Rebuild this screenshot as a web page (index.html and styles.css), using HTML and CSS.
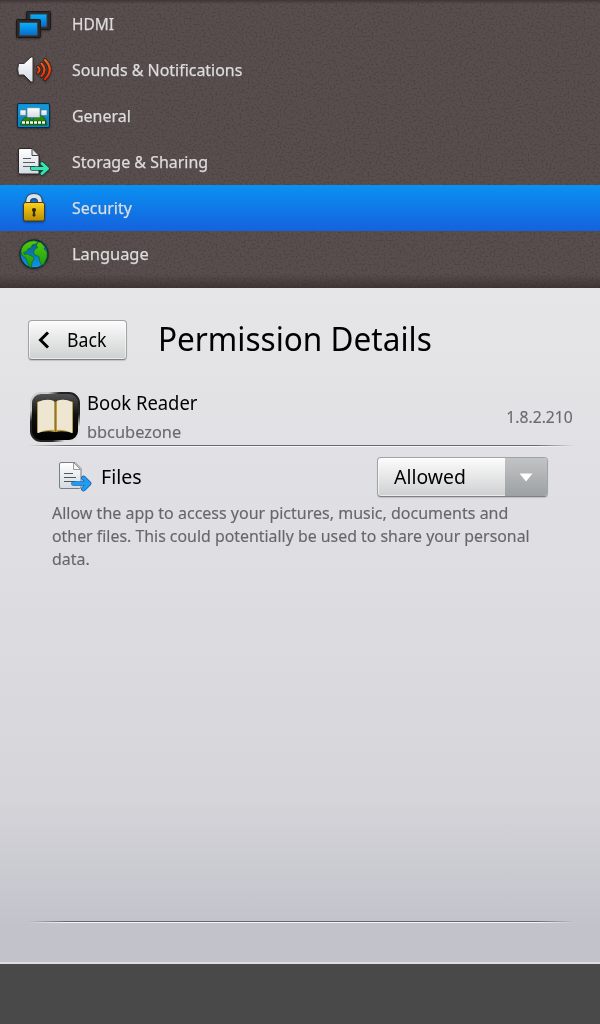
FILE: index.html
```html
<!DOCTYPE html>
<html lang="en">
<head>
<meta charset="utf-8">
<title>Permission Details</title>
<link rel="stylesheet" href="styles.css">
</head>
<body>
<svg class="defs" width="0" height="0" aria-hidden="true">
  <defs>
    <linearGradient id="screen" x2="0" y2="1"><stop stop-color="#08b0fb"/><stop offset="1" stop-color="#0869cb"/></linearGradient>
    <linearGradient id="paper" x2="0" y2="1"><stop stop-color="#fff"/><stop offset="1" stop-color="#d2dae3"/></linearGradient>
    <linearGradient id="gold" x2="0" y2="1"><stop stop-color="#ffd21c"/><stop offset="1" stop-color="#b88b00"/></linearGradient>
    <linearGradient id="leaf" x2="0" y2="1"><stop stop-color="#55c80d"/><stop offset="1" stop-color="#189b12"/></linearGradient>
    <linearGradient id="sea" x2="0" y2="1"><stop stop-color="#075985"/><stop offset="1" stop-color="#1297e4"/></linearGradient>
    <linearGradient id="wave" x2="0" y2="1"><stop stop-color="#ff6415"/><stop offset="1" stop-color="#ed2905"/></linearGradient>
    <linearGradient id="tile" x2="0" y2="1"><stop stop-color="#555"/><stop offset=".45" stop-color="#111"/><stop offset="1" stop-color="#000"/></linearGradient>
    <linearGradient id="rim" x2="1" y2="1"><stop stop-color="#ccc"/><stop offset=".18" stop-color="#ccc"/><stop offset=".3" stop-color="#222"/><stop offset=".72" stop-color="#222"/><stop offset=".85" stop-color="#ddd"/><stop offset="1" stop-color="#ddd"/></linearGradient>
  </defs>
</svg>
<nav class="menu">
  <svg class="grain" width="600" height="288" aria-hidden="true">
    <filter id="noise" x="0" y="0" width="100%" height="100%" color-interpolation-filters="sRGB"><feTurbulence type="fractalNoise" baseFrequency=".5" numOctaves="2" seed="4"/><feColorMatrix values="0 0 0 0 .16  0 0 0 0 .13  0 0 0 0 .13  0 5 0 0 -2.4"/></filter>
    <rect width="600" height="288" filter="url(#noise)" opacity=".2"/>
  </svg>
  <a class="item"><svg class="icon" viewBox="0 0 46 46"><g stroke="#1b1b1c"><rect x="26.500" y="10.500" width="24" height="18" rx="1" fill="#29292b" transform="translate(-6 0)"/><rect x="24" y="13" width="17" height="13" fill="url(#screen)" stroke="#3c3c3e"/><rect x="10.500" y="18.500" width="24" height="18" rx="1" fill="#29292b"/><rect x="13.500" y="21.500" width="18" height="13" fill="url(#screen)" stroke="#424245"/></g></svg><span class="hdmi">HDMI</span></a>
  <a class="item"><svg class="icon" viewBox="0 0 46 46"><path d="M12.500 16.500h5.500l7-6.500h2v25h-2l-7-7h-5.500q-1.500-5.500 0-11.500z" fill="url(#paper)" stroke="#3b3434"/><g fill="none" stroke="#31201f" stroke-width="3.600" stroke-linecap="round"><path d="M32 20q3 2.700 0 5.500M35.500 16.500q6 6.300 0 12.500M39 13q9.500 9.500 0 19"/></g><g fill="none" stroke="url(#wave)" stroke-width="2.100" stroke-linecap="round"><path d="M32 20q3 2.700 0 5.500M35.500 16.500q6 6.300 0 12.500M39 13q9.500 9.500 0 19"/></g></svg><span class="sounds">Sounds &amp; Notifications</span></a>
  <a class="item"><svg class="icon" viewBox="0 0 46 46"><rect x="11.500" y="10.500" width="32" height="24" rx="1.500" fill="#1186c7" stroke="#082b43"/><path d="M12.500 11.500h30v12h-30z" fill="#1396d7"/><path d="M14 32q3-8 7-8 3 0 5 4 3-7 8-6 5 1 7 10z" fill="#278d08" stroke="#135908" stroke-width=".8"/><g fill="url(#paper)" stroke="#477084" stroke-width=".6"><rect x="14" y="17" width="6" height="5.500" rx=".7"/><rect x="21" y="14.700" width="13" height="9.800" rx=".7"/><rect x="35" y="17" width="6" height="5.500" rx=".7"/></g><path d="M16 29.500h24" fill="none" stroke="#194a0e" stroke-width="3.500"/><path d="M16 29.500h24" fill="none" stroke="#fbfff0" stroke-width="2.600" stroke-dasharray="3 1"/></svg><span class="general">General</span></a>
  <a class="item"><svg class="icon" viewBox="0 0 46 46"><path d="M12.500 11q0-1.500 1.500-1.500h12l7 7v17q0 1.500-1.500 1.500h-17.500q-1.500 0-1.500-1.500z" fill="url(#paper)" stroke="#292626"/><path d="M26 9.500v7h7z" fill="#e2e5e8" stroke="#444"/><path d="M17 19.500h8m-8 4h12m-12 4h12" fill="none" stroke="#555b61" stroke-width="1"/><path d="M26 29.500h15m-5-5 5.500 5-5.500 5" fill="none" stroke="#17443a" stroke-width="4.300" stroke-linecap="round" stroke-linejoin="round"/><path d="M26 29.500h15m-5-5 5.500 5-5.500 5" fill="none" stroke="#35e5b1" stroke-width="2.900" stroke-linecap="round" stroke-linejoin="round"/></svg><span class="storage">Storage &amp; Sharing</span></a>
  <a class="item selected"><svg class="icon" viewBox="0 0 46 46"><path d="M22 19v-2q0-6 6-6t6 6v2" fill="none" stroke="#31465a" stroke-width="5.500"/><path d="M22 19v-2q0-6 6-6t6 6v2" fill="none" stroke="#dce2e8" stroke-width="3.800"/><rect x="17.500" y="17.500" width="21" height="18.500" rx="2" fill="url(#gold)" stroke="#3f3921"/><circle cx="28" cy="25" r="2.100" fill="#302704"/><path d="m28 24 1 7h-2z" fill="#302704" stroke="#302704"/></svg><span class="security">Security</span></a>
  <a class="item"><svg class="icon" viewBox="0 0 46 46"><circle cx="28" cy="23" r="14" fill="url(#sea)" stroke="#182a33" stroke-width="1.300"/><path d="M15 21q0-7 8-10.500l5-.8 4 1-2 2.300-4 1-.5 2.500-3 1-2 3-3 1 1 2 3-.5 6 3 .5 2-2 3-.5 5-1.500.5-3-6-1-3.500-4-3zM32 11l3 .5 4 4.500-1 2 3 3v5l-3 7-2.500 1.500-2-5-.5-4-4-1.500-1.500-3 2-3.500 2-.5-1-3z" fill="url(#leaf)" stroke="#096024" stroke-width=".6"/></svg><span class="language">Language</span></a>
</nav>
<main class="details">
  <header class="heading"><button class="back"><svg width="12" height="18" viewBox="0 0 12 18"><path d="m10 1.500-7.500 7.500 7.500 7.500" fill="none" stroke="#000" stroke-width="3"/></svg><span class="back-text">Back</span></button><h1><span class="title">Permission Details</span></h1></header>
  <section class="app">
    <svg class="book" width="50" height="50" viewBox="0 0 50 50"><rect x="1" y="1" width="48" height="48" rx="10" fill="url(#tile)" stroke="url(#rim)" stroke-width="2"/><path d="M7 10l8-2q6-.5 10 2 4-3 10-2l8 2v31q-11-3-17-1h-2q-6-2-17 1z" fill="#b89b4b"/><path d="M8 10q9-4 16-1v29q-7-1-16 3zM27 9q7-3 15 1v31q-9-4-15-3z" fill="#eee6d1"/><path d="M25.500 10v30" stroke="#92752b" stroke-width="1"/></svg>
    <div class="app-info"><div class="app-name"><span class="name">Book Reader</span></div><div class="vendor"><span class="author">bbcubezone</span></div></div>
    <div class="version"><span class="number">1.8.2.210</span></div>
  </section>
  <div class="rule"></div>
  <section class="permission">
    <div class="permission-head"><svg width="36" height="34" viewBox="0 0 36 34"><path d="M3.500 3q0-1.500 1.500-1.500h14l6 6v18.500q0 1.500-1.500 1.500h-18.500q-1.500 0-1.500-1.500z" fill="url(#paper)" stroke="#7d7d7d"/><path d="M17.500 1.500v7h7z" fill="#f6f6f6" stroke="#999"/><path d="M8 12.500h9m-9 4h12m-12 4h12" fill="none" stroke="#555" stroke-width="1"/><path d="M17.500 22.500h15m-5-5.500 5.500 5.500-5.500 5.500" fill="none" stroke="#165f9e" stroke-width="4.700" stroke-linecap="round" stroke-linejoin="round"/><path d="M17.500 22.500h15m-5-5.500 5.500 5.500-5.500 5.500" fill="none" stroke="#209cf8" stroke-width="3.300" stroke-linecap="round" stroke-linejoin="round"/></svg><h2><span class="files">Files</span></h2><button class="select"><span class="choice"><span class="allowed">Allowed</span></span><span class="drop"><svg width="14" height="9" viewBox="0 0 14 9"><path d="M.5.5h13L7 8.500z" fill="#fff"/></svg></span></button></div>
    <p><span class="copy one">Allow the app to access your pictures, music, documents and</span><span class="copy two">other files. This could potentially be used to share your personal</span><span class="copy three">data.</span></p>
  </section>
  <div class="rule bottom"></div>
</main>
<footer></footer>
</body>
</html>
```
FILE: styles.css
```css
* { box-sizing: border-box; }
body { margin: 0; width: 600px; height: 1024px; display: flex; flex-direction: column; overflow: hidden; background: #494949; font-family: "Noto Sans", "Open Sans", sans-serif; }
.defs { position: absolute; }
span { white-space: nowrap; }
.menu { position: relative; height: 288px; padding-top: 1px; background: #584e4d; color: #dedddc; font-size: 17px; }
.menu::after { content: ""; position: absolute; inset: 0; pointer-events: none; background: linear-gradient(#3e3636, transparent 4px, transparent 274px, rgba(48, 40, 40, .65)); }
.grain { position: absolute; inset: 0; }
.item { position: relative; z-index: 1; display: flex; align-items: center; height: 46px; padding-left: 6px; }
.icon { width: 46px; height: 46px; margin-right: 20px; filter: drop-shadow(0 1px 1px rgba(0, 0, 0, .4)); }
.item > span { display: inline-block; padding-bottom: 2px; transform-origin: left; transform: scaleX(.938); -webkit-text-stroke: .25px; }
.item > .hdmi { transform: scaleX(.91); }
.item > .language { transform: scaleX(.965); }
.selected { background: linear-gradient(#0a91f2, #1562dc); }
.details { height: 676px; padding: 32px 26px 0 28px; background: linear-gradient(#e6e6e8, #dddde2 42%, #d5d5da 75%, #c2c2cb 95%, #c2c2ca); border-bottom: 2px solid #dcdde2; }
.heading { display: flex; height: 40px; align-items: center; }
button { font: inherit; color: #000; padding: 0; border: 1px solid #a0a3a8; border-bottom-color: #7d8186; border-radius: 4px; background: linear-gradient(#fcfcfc, #cfd0d1); box-shadow: inset 0 0 0 1px rgba(255,255,255,.55), 0 1px 1px rgba(0, 0, 0, .15); }
.back { width: 99px; height: 40px; display: flex; align-items: center; padding-left: 9px; font-size: 19px; }
.back svg { margin-right: 17px; }
h1, h2, p { margin: 0; font-weight: 400; }
h1 { margin-left: 31px; padding-bottom: 3px; font-size: 32px; line-height: 40px; }
h1 span, h2 span, .back-text, .name, .author, .number, .allowed, .copy { display: inline-block; transform-origin: left; }
.title { transform: scaleX(.985); }
.back-text { transform: scaleX(.93); }
.app { display: flex; height: 53px; margin-top: 32px; padding-left: 2px; }
.app-info { padding-left: 7px; }
.app-name { height: 23px; font-size: 19px; line-height: 23px; }
.name { transform: scaleX(.97); }
.vendor { font-size: 17px; color: #696a6e; line-height: 34px; }
.author { transform: scaleX(.962); }
.version { margin-left: auto; padding-right: 1px; color: #696a6e; font-size: 16px; line-height: 50px; }
.author, .number, .copy { -webkit-text-stroke: .15px; }
.number { transform-origin: right; transform: scaleX(.98); }
.rule { height: 2px; background: linear-gradient(#68696d 0 50%, #f6f6f7 50%); -webkit-mask-image: linear-gradient(90deg, transparent, #000 7%, #000 93%, transparent); mask-image: linear-gradient(90deg, transparent, #000 7%, #000 93%, transparent); }
.permission { padding: 10px 26px 0 24px; }
.permission-head { display: flex; height: 44px; padding-left: 4px; align-items: flex-start; }
.permission-head > svg { margin-top: 4px; }
h2 { margin-left: 9px; font-size: 19px; line-height: 41px; }
.files { transform: scaleX(1.03); }
.select { margin-left: auto; width: 171px; height: 40px; display: flex; overflow: hidden; }
.choice { width: 127px; padding-left: 16px; text-align: left; line-height: 38px; font-size: 19px; }
.allowed { transform: scaleX(1.02); }
.drop { width: 42px; display: flex; align-items: center; justify-content: center; background: linear-gradient(#c2c3c4, #9da1a3); }
p { display: flex; flex-direction: column; align-items: flex-start; color: #66676b; font-size: 17px; line-height: 23px; }
.one { transform: scaleX(.942); }
.two { transform: scaleX(.934); }
.three { transform: scaleX(.94); }
.bottom { margin-top: 351px; }
footer { height: 60px; background: #494949; }
```
